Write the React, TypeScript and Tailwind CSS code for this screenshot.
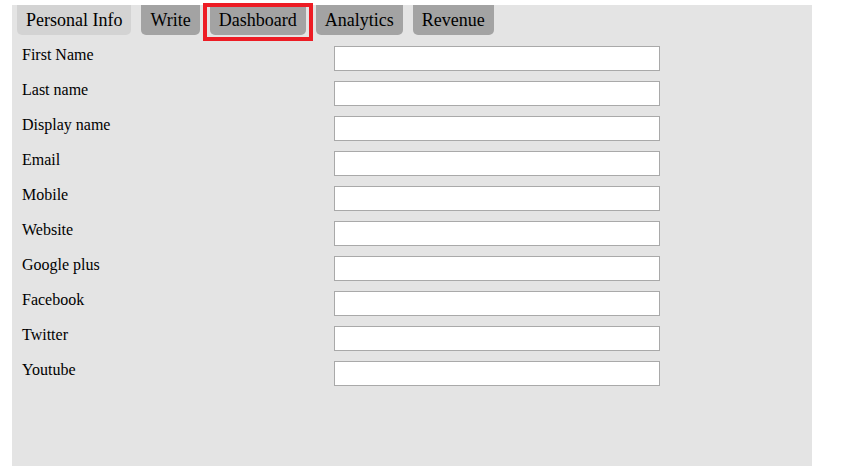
import React from 'react';

const tabs = ['Personal Info', 'Write', 'Dashboard', 'Analytics', 'Revenue'];

const fields = [
  'First Name',
  'Last name',
  'Display name',
  'Email',
  'Mobile',
  'Website',
  'Google plus',
  'Facebook',
  'Twitter',
  'Youtube',
];

export default function App() {
  return (
    <div className="w-[854px] h-[466px] bg-white overflow-hidden font-['Liberation_Serif',serif] text-black">
      <div className="ml-[12px] mt-[5px] w-[800px] h-[461px] bg-[#e4e4e4] px-[5px]">
        <nav className="flex gap-[10px]">
          {tabs.map((tab, i) => (
            <div key={tab} className="relative">
              <button
                className={`h-[30px] px-[9px] rounded-b-[5px] text-[18px] leading-[30px] ${
                  i === 0 ? 'bg-[#d3d3d3]' : 'bg-[#a3a3a3]'
                }`}
              >
                {tab}
              </button>
              {tab === 'Dashboard' && (
                <span className="absolute -left-[7px] -right-[7px] -top-[2px] -bottom-[6px] border-[4px] border-[#ed1c24] pointer-events-none" />
              )}
            </div>
          ))}
        </nav>

        <form className="mt-[11px] flex flex-col gap-[10px] pl-[5px]">
          {fields.map((label) => (
            <div key={label} className="flex items-start">
              <label className="w-[312px] text-[16px] leading-[18px]">{label}</label>
              <input
                type="text"
                className="w-[326px] h-[25px] bg-white border border-[#a9a9a9] outline-none"
              />
            </div>
          ))}
        </form>
      </div>
    </div>
  );
}
